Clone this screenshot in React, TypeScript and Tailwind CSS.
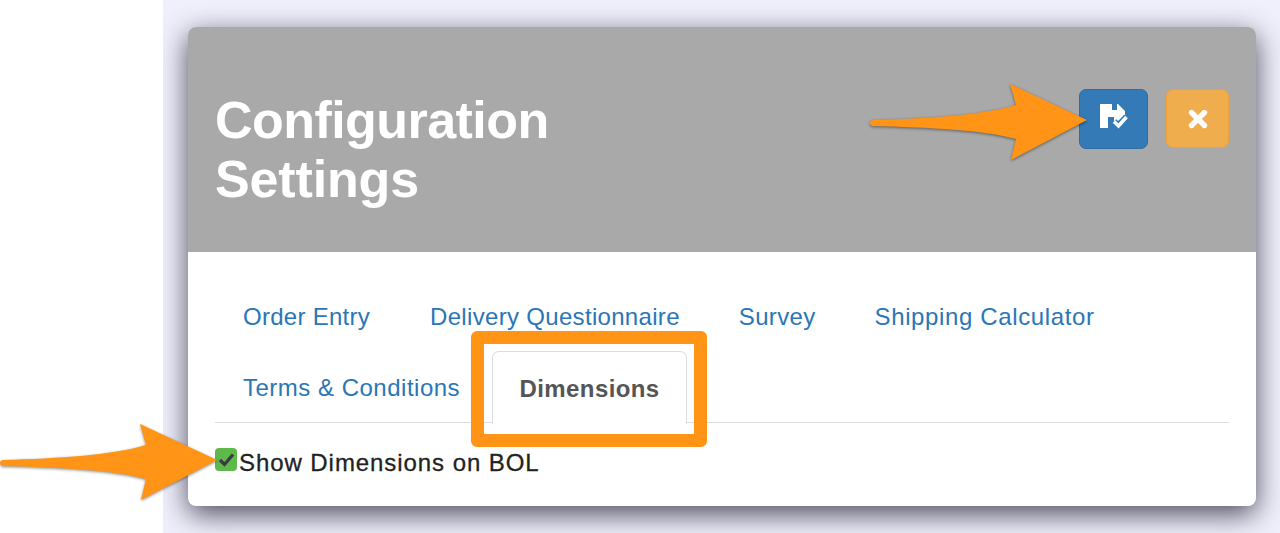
import React from 'react';
import { X } from 'lucide-react';

const tabs = [
  { label: 'Order Entry', track: 'tracking-[0.27px]' },
  { label: 'Delivery Questionnaire', track: 'tracking-[0.32px] -mr-[1px]' },
  { label: 'Survey', track: 'tracking-[0.33px] -mr-[1px]' },
  { label: 'Shipping Calculator', track: 'tracking-[0.63px]' },
  { label: 'Terms & Conditions', track: 'tracking-[0.5px]' },
];

// callout arrow, tip points right; drawn in a 220x80 box
function Arrow({ className }: { className: string }) {
  return (
    <svg width="220" height="80" viewBox="0 0 220 80" className={`absolute drop-shadow-[0_1px_1.5px_rgba(0,0,0,0.45)] ${className}`}>
      <path
        d="M4 36 C60 34.5 115 31 147 21 L141 0 L218 36 L142 76 L147 55 C115 46 60 43.5 4 42 C0 41.5 0 36.5 4 36 Z"
        fill="#ff9416"
      />
    </svg>
  );
}

function SaveIcon() {
  return (
    <svg width="28" height="25" viewBox="0 0 28 25" className="-mt-[5px]">
      <path
        d="M0 0 H12 V6 H17 V0 H18 L25 7 V11 L18 17 H14 V13 H8 V24 H0 Z"
        fill="#fff"
      />
      <path d="M14 17.5 L18.5 22 L26.5 13" fill="none" stroke="#337ab7" strokeWidth="6.5" />
      <path d="M14 17.5 L18.5 22 L26.5 13" fill="none" stroke="#fff" strokeWidth="3.6" />
    </svg>
  );
}

export default function App() {
  return (
    <div className="relative flex w-[1280px] h-[533px] overflow-hidden bg-white font-['Liberation_Sans',Arial,sans-serif]">
      <div className="w-[163px] shrink-0 bg-white" />
      <div className="flex-1 overflow-hidden bg-[#f0f0fc] pt-[27px] pl-[25px] pr-[24px]">
        <div className="h-[479px] rounded-[8px] bg-white overflow-hidden shadow-[0_8px_28px_rgba(30,30,50,0.8)]">
          <header className="flex justify-between h-[225px] bg-[#a9a9a9] pl-[27px] pr-[27px] pt-[64px]">
            <h1 className="w-[400px] text-[52px] leading-[59px] font-semibold text-white">
              <span className="block tracking-[-0.55px]">Configuration</span>
              <span className="block tracking-[-0.15px]">Settings</span>
            </h1>
            <div className="flex gap-[18px] h-[60px] -mt-[2px]">
              <button className="flex items-center justify-center w-[69px] h-[60px] rounded-[7px] bg-[#337ab7] border border-[#2e6da4]">
                <SaveIcon />
              </button>
              <button className="flex items-center justify-center w-[63px] h-[59px] rounded-[7px] bg-[#f0ad4e] border border-[#eea236]">
                <X size={26} strokeWidth={5} color="#fff" />
              </button>
            </div>
          </header>

          <div className="px-[27px]">
            <nav className="flex flex-wrap h-[171px] pt-[29px] border-b border-[#dddddd] content-start">
              {tabs.map((t) => (
                <a key={t.label} className={`h-[71px] pl-[28px] pr-[32px] pt-[19px] text-[24px] leading-[34px] text-[#2a76b6] whitespace-nowrap ${t.track}`}>
                  {t.label}
                </a>
              ))}
              <a className="h-[73px] w-[195px] -mt-[1px] rounded-t-[7px] border border-b-0 border-[#dddddd] bg-white text-center pt-[20px] text-[24px] leading-[34px] font-bold text-[#555555] tracking-[0.4px]">
                Dimensions
              </a>
            </nav>
            <label className="flex items-center pt-[25px] text-[24px] leading-[30px] font-medium text-[#222222] tracking-[0.93px] [-webkit-text-stroke:0.3px_#222222]">
              <span className="flex items-center justify-center w-[22px] h-[23px] mr-[2px] -mt-[7px] rounded-[4px] bg-[#5fb84a]">
                <svg width="17" height="15" viewBox="0 0 17 15">
                  <path d="M2 8 L6.5 12.5 L15 2.5" fill="none" stroke="#3a3a44" strokeWidth="3.2" />
                </svg>
              </span>
              Show Dimensions on BOL
            </label>
          </div>
        </div>
      </div>

      {/* orange highlight + callouts sit over the modal */}
      <div className="absolute left-[471px] top-[331px] w-[236px] h-[116px] rounded-[6px] border-[13px] border-[#ff9416]" />
      <Arrow className="left-[869px] top-[84px]" />
      <Arrow className="left-[-1px] top-[424px]" />
    </div>
  );
}
